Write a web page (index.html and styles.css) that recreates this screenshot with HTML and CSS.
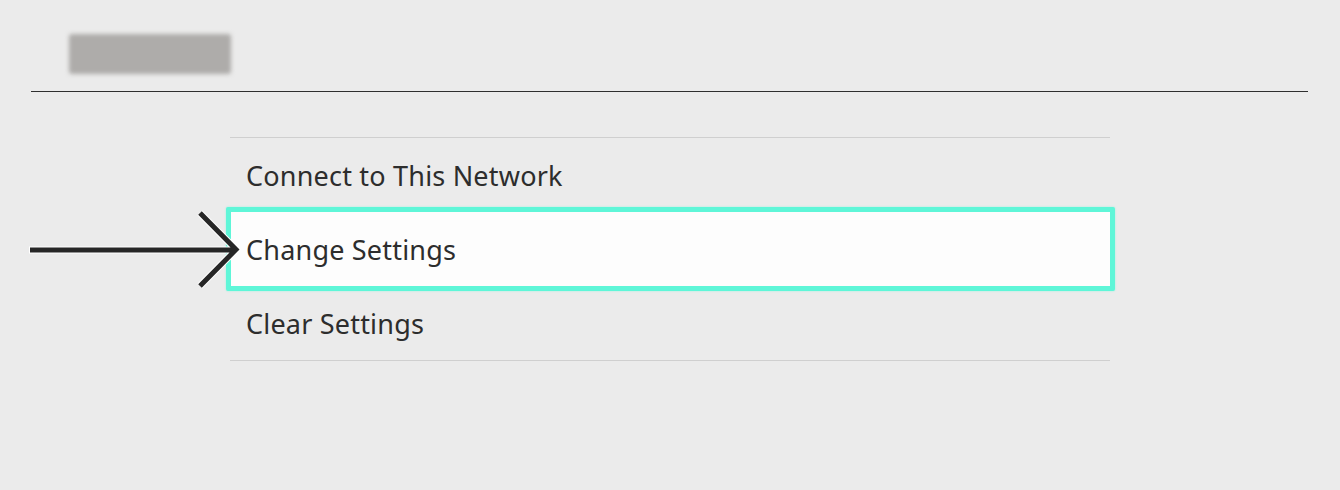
FILE: index.html
```html
<!DOCTYPE html>
<html>
<head>
<meta charset="utf-8">
<link rel="stylesheet" href="styles.css">
</head>
<body>
<div class="page">
  <header class="header">
    <div class="title-blur"></div>
  </header>
  <main class="content">
    <ul class="menu">
      <li class="item">Connect to This Network</li>
      <li class="item selected">Change Settings</li>
      <li class="item">Clear Settings</li>
    </ul>
    <svg class="pointer" width="230" height="100" viewBox="0 0 230 100">
      <g fill="none" stroke-linecap="butt" stroke-linejoin="miter">
        <path d="M1 50 H206 M172 13 L208 49.5 L172 86" stroke="#ffffff" stroke-width="7"/>
        <path d="M2 50 H206 M172 13 L208 49.5 L172 86" stroke="#262626" stroke-width="5"/>
      </g>
    </svg>
  </main>
</div>
</body>
</html>
```
FILE: styles.css
```css
html, body {
  margin: 0;
  padding: 0;
  background: #ebebeb;
}
body {
  width: 1340px;
  height: 490px;
  overflow: hidden;
  font-family: "Noto Sans", "Open Sans", sans-serif;
  color: #2d2d2d;
}
.page {
  display: flex;
  flex-direction: column;
}
.header {
  height: 91px;
  margin: 0 32px 0 31px;
  border-bottom: 1px solid #2f2f2f;
  box-sizing: content-box;
  display: flex;
  align-items: flex-start;
}
.title-blur {
  width: 162px;
  height: 40px;
  margin: 34px 0 0 38px;
  background: #aeacaa;
  border-radius: 3px;
  filter: blur(2px);
}
.content {
  position: relative;
  padding-top: 45px;
}
.menu {
  list-style: none;
  margin: 0 0 0 230px;
  padding: 0;
  width: 880px;
  border-top: 1px solid #cfcfcf;
  border-bottom: 1px solid #cfcfcf;
}
.item {
  height: 74px;
  display: flex;
  align-items: center;
  padding-left: 16px;
  font-size: 27px;
  letter-spacing: 0.2px;
  box-sizing: border-box;
}
.item.selected {
  margin: 0 -5px 0 -4px;
  height: 84px;
  margin-top: -5px;
  margin-bottom: -5px;
  position: relative;
  background: #fdfdfd;
  border: 5px solid #5ff6d8;
  border-radius: 2px;
  padding-left: 15px;
  box-shadow: 0 0 2px rgba(95, 246, 216, 0.6);
}
.pointer {
  position: absolute;
  left: 28px;
  top: 108px;
}
```
